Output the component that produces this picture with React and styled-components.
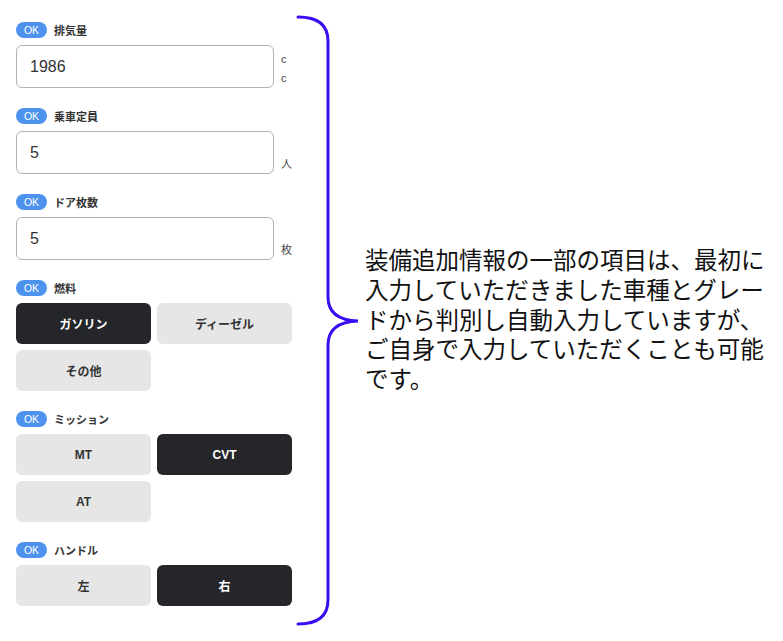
import React from "react";
import styled, { createGlobalStyle } from "styled-components";

const GlobalStyle = createGlobalStyle`
  html, body {
    margin: 0;
    padding: 0;
    background: #fff;
  }
  body {
    font-family: "Liberation Sans", "Noto Sans CJK JP", sans-serif;
    color: #333;
  }
`;

const sections = [
  { label: "排気量", type: "input", value: "1986", unit: "cc" },
  { label: "乗車定員", type: "input", value: "5", unit: "人" },
  { label: "ドア枚数", type: "input", value: "5", unit: "枚" },
  { label: "燃料", type: "choice", options: ["ガソリン", "ディーゼル", "その他"], selected: 0 },
  { label: "ミッション", type: "choice", options: ["MT", "CVT", "AT"], selected: 1 },
  { label: "ハンドル", type: "choice", options: ["左", "右"], selected: 1 },
];

function Brace() {
  return (
    <BraceSvg width="73" height="641" viewBox="0 0 73 641">
      <path
        d="M6 17 Q36 17 36 41 L36 297 Q36 320 66 321 Q36 322 36 345 L36 600 Q36 624 6 624"
        fill="none"
        stroke="#3a0cf2"
        strokeWidth="3"
        strokeLinecap="round"
      />
    </BraceSvg>
  );
}

function App() {
  return (
    <>
      <GlobalStyle />
      <Page>
        <Panel>
          {sections.map((s) => (
            <Section key={s.label}>
              <LabelRow>
                <Badge>OK</Badge>
                <Label>{s.label}</Label>
              </LabelRow>
              {s.type === "input" ? (
                <InputRow>
                  <Field readOnly value={s.value} />
                  <Unit>{s.unit}</Unit>
                </InputRow>
              ) : (
                <Choices>
                  {s.options.map((o, i) => (
                    <Choice key={o} active={i === s.selected}>
                      {o}
                    </Choice>
                  ))}
                </Choices>
              )}
            </Section>
          ))}
        </Panel>
        <Brace />
        <Note>
          装備追加情報の一部の項目は、最初に入力していただきました車種とグレードから判別し自動入力していますが、ご自身で入力していただくことも可能です。
        </Note>
      </Page>
    </>
  );
}

export default App;

const Page = styled.div`
  display: flex;
  height: 641px;
  width: 783px;
  overflow: hidden;
`;

const Panel = styled.div`
  width: 276px;
  flex-shrink: 0;
  padding: 22px 0 0 16px;
`;

const Section = styled.div`
  margin-bottom: 20px;
`;

const LabelRow = styled.div`
  display: flex;
  align-items: center;
  height: 16px;
  margin-bottom: 7px;
`;

const Badge = styled.span`
  display: inline-flex;
  align-items: center;
  justify-content: center;
  width: 31px;
  height: 16px;
  border-radius: 8px;
  background: #4d93ee;
  color: #fff;
  font-size: 10.5px;
  line-height: 1;
`;

const Label = styled.span`
  margin-left: 7px;
  font-size: 11px;
  font-weight: 700;
  color: #333;
`;

const InputRow = styled.div`
  display: flex;
`;

const Field = styled.input`
  box-sizing: border-box;
  width: 258px;
  height: 43px;
  border: 1px solid #b3b3b3;
  border-radius: 6px;
  padding: 0 13px;
  font-family: "Liberation Sans", "Noto Sans CJK JP", sans-serif;
  font-size: 16px;
  color: #333;
  outline: none;
`;

const Unit = styled.span`
  align-self: flex-end;
  width: 8px;
  margin-left: 7px;
  font-size: 11px;
  line-height: 19px;
  color: #444;
  word-break: break-all;
  overflow-wrap: anywhere;
`;

const Choices = styled.div`
  display: grid;
  grid-template-columns: 135px 135px;
  column-gap: 6px;
  row-gap: 6px;
`;

const Choice = styled.div`
  height: 41px;
  border-radius: 6px;
  display: flex;
  align-items: center;
  justify-content: center;
  font-size: 12px;
  font-weight: 700;
  background: ${(p) => (p.active ? "#25262a" : "#e6e6e6")};
  color: ${(p) => (p.active ? "#fff" : "#333")};
`;

const BraceSvg = styled.svg`
  flex-shrink: 0;
  display: block;
`;

const Note = styled.p`
  align-self: center;
  margin: 0;
  width: 412px;
  padding-bottom: 2px;
  font-family: "Noto Sans CJK JP", sans-serif;
  font-size: 23.5px;
  line-height: 29.7px;
  color: #111;
`;
